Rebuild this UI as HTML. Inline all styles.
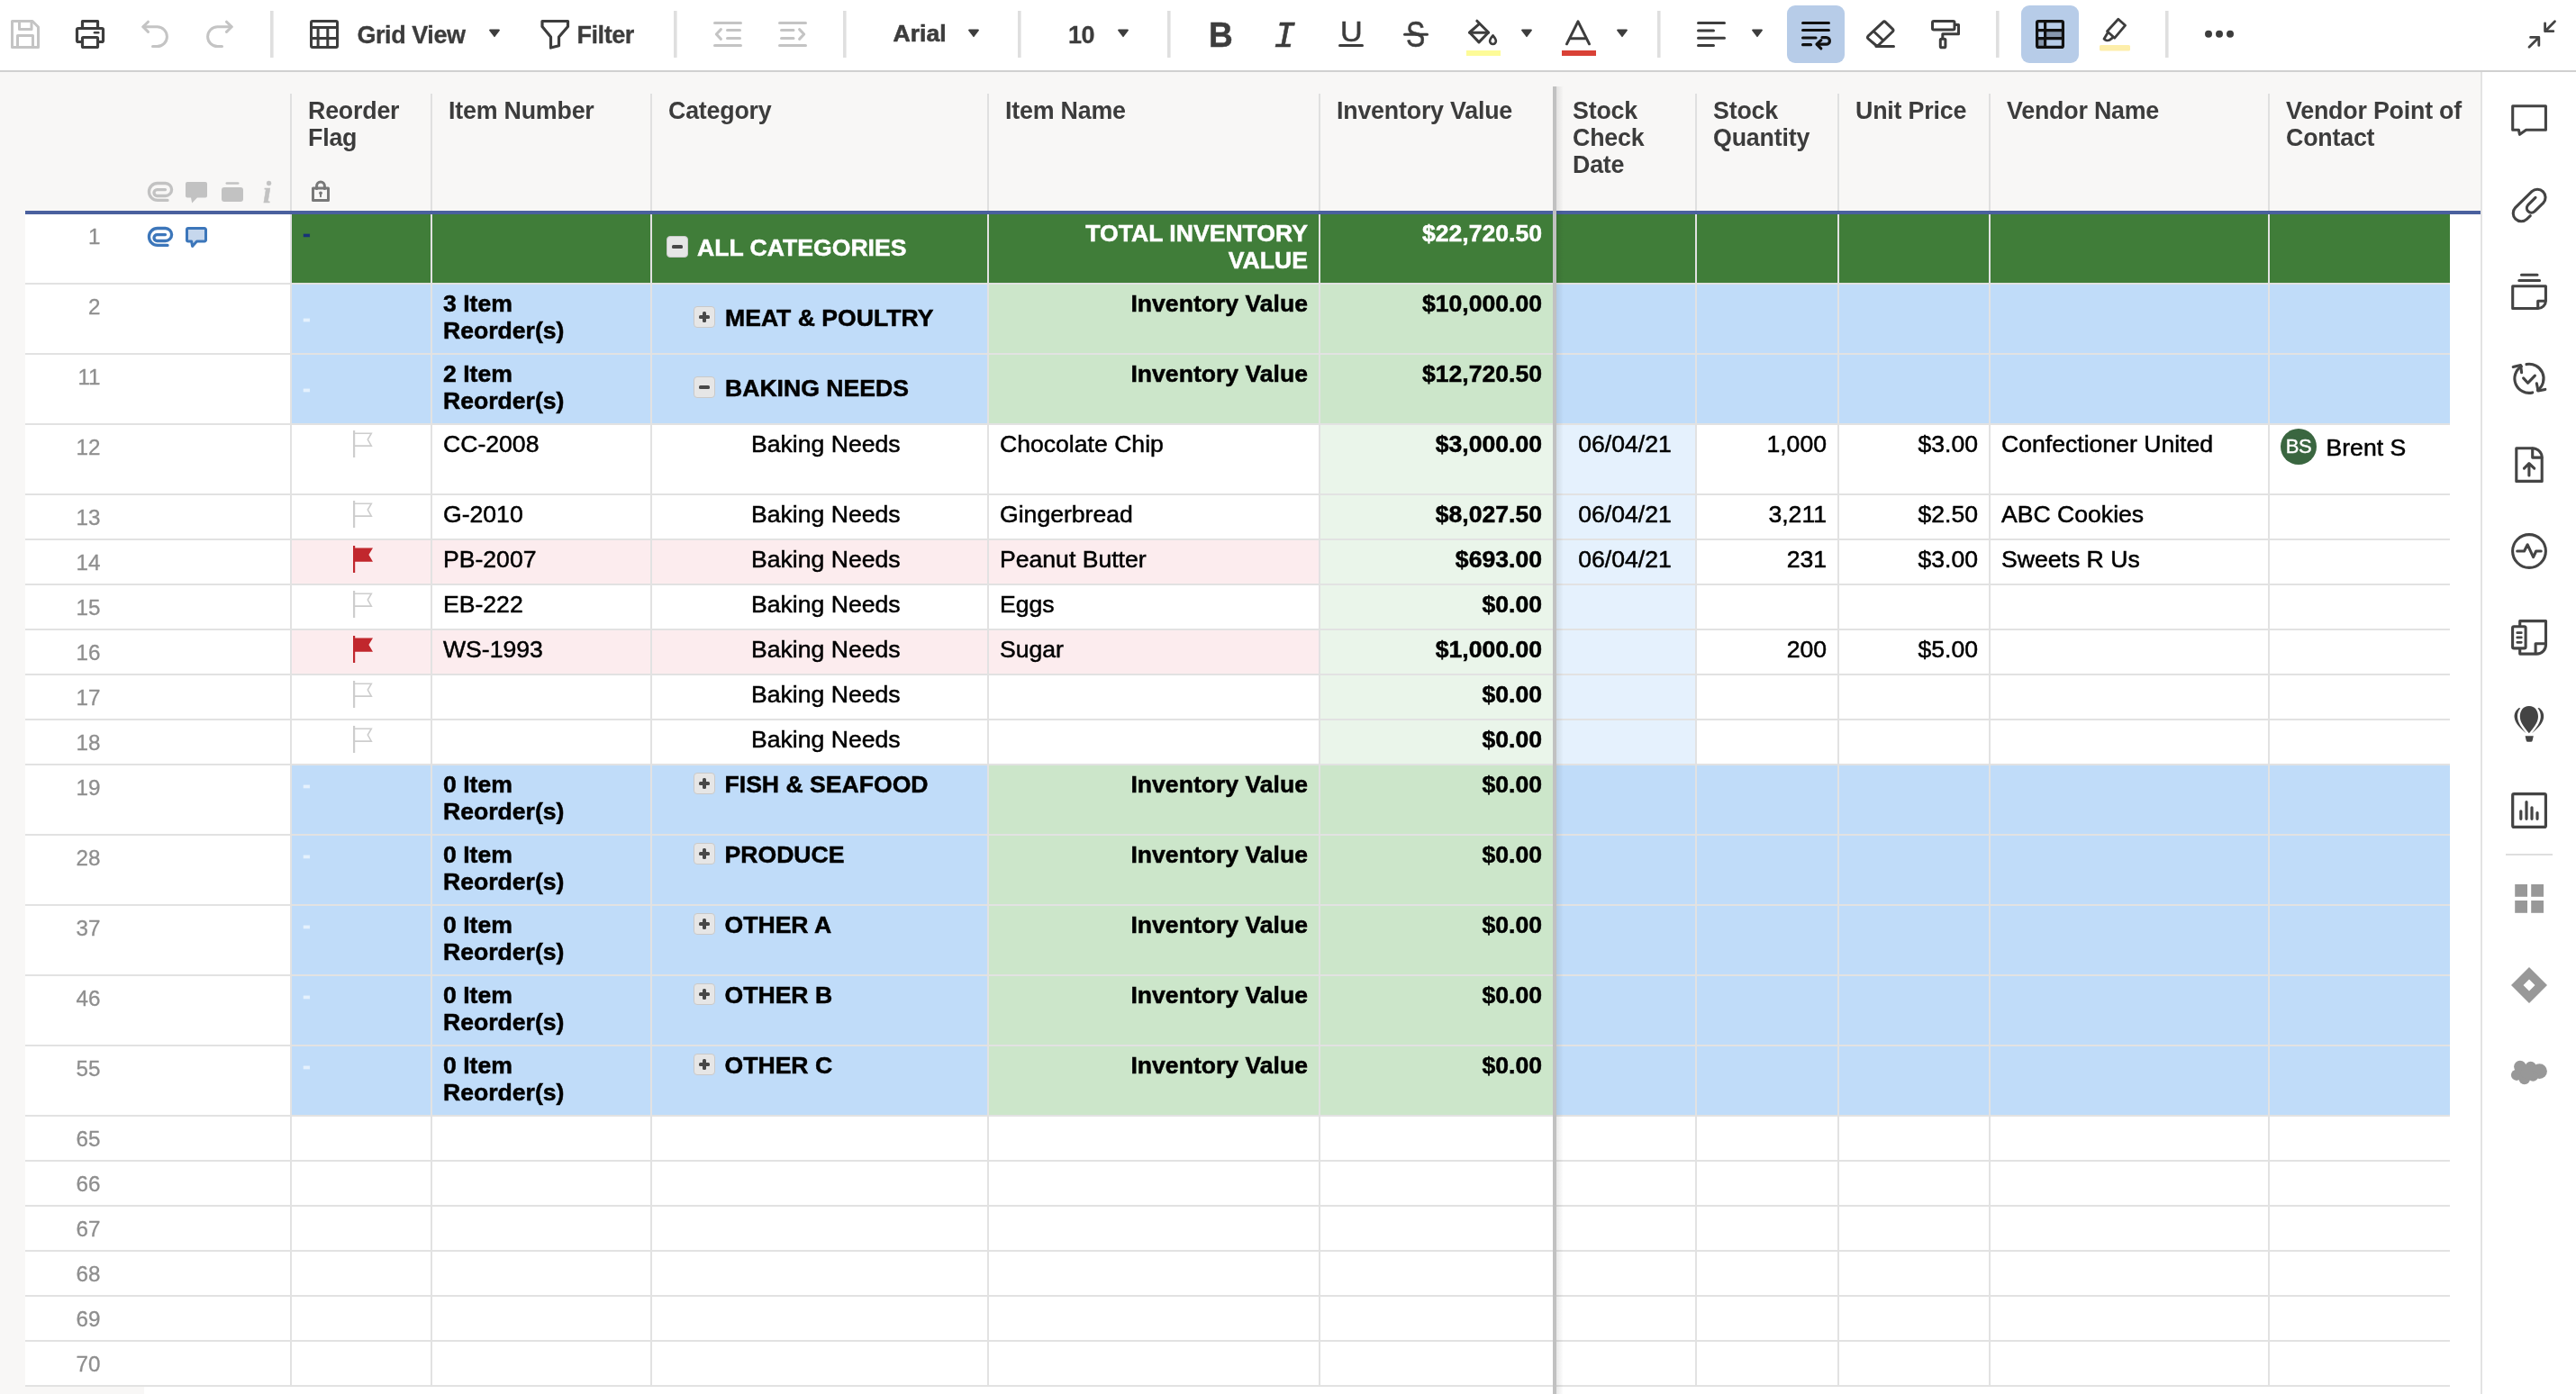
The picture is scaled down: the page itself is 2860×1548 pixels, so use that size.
<!DOCTYPE html>
<html lang="en"><head><meta charset="utf-8"><title>Inventory Sheet - Grid View</title>
<style>
html,body{margin:0;padding:0;}
body{width:2860px;height:1548px;overflow:hidden;background:#fff;position:relative;font-family:"Liberation Sans",sans-serif;}
#app{position:absolute;left:0;top:0;width:2860px;height:1548px;overflow:hidden;will-change:transform;}
.r,.a,.t{position:absolute;}
.t{font-size:26.6px;line-height:30px;color:#000;white-space:nowrap;-webkit-text-stroke:0.5px;}
.b{font-weight:bold;}
.h{font-weight:bold;color:#3c3c3c;font-size:26.8px;letter-spacing:-0.2px;-webkit-text-stroke:0;}
.n{color:#8e8e8e;font-size:24.2px;-webkit-text-stroke:0.3px;}
.tb{font-weight:bold;color:#3c3c3c;font-size:26px;-webkit-text-stroke:0.3px;}
svg{display:block;overflow:visible;}
</style></head><body><div id="app">

<div class="r" style="left:0px;top:80px;width:2754px;height:1468px;background:#f8f7f6;"></div>
<div class="r" style="left:28px;top:238px;width:2726px;height:1302px;background:#fff;"></div>
<div class="r" style="left:160px;top:1540px;width:2594px;height:8px;background:#fff;"></div>
<div class="r" style="left:2754px;top:80px;width:2px;height:1468px;background:#e3e3e3;"></div>
<div class="r" style="left:0px;top:78px;width:2860px;height:2px;background:#d0d0d0;"></div>
<div class="r" style="left:322px;top:104px;width:2px;height:130px;background:#e0e0e0;"></div>
<div class="r" style="left:478px;top:104px;width:2px;height:130px;background:#e0e0e0;"></div>
<div class="r" style="left:722px;top:104px;width:2px;height:130px;background:#e0e0e0;"></div>
<div class="r" style="left:1096px;top:104px;width:2px;height:130px;background:#e0e0e0;"></div>
<div class="r" style="left:1464px;top:104px;width:2px;height:130px;background:#e0e0e0;"></div>
<div class="r" style="left:1882px;top:104px;width:2px;height:130px;background:#e0e0e0;"></div>
<div class="r" style="left:2040px;top:104px;width:2px;height:130px;background:#e0e0e0;"></div>
<div class="r" style="left:2208px;top:104px;width:2px;height:130px;background:#e0e0e0;"></div>
<div class="r" style="left:2518px;top:104px;width:2px;height:130px;background:#e0e0e0;"></div>
<div class="t h" style="left:342px;top:108px;width:176px;text-align:left;">Reorder<br>Flag</div>
<div class="t h" style="left:498px;top:108px;width:264px;text-align:left;">Item Number</div>
<div class="t h" style="left:742px;top:108px;width:394px;text-align:left;">Category</div>
<div class="t h" style="left:1116px;top:108px;width:388px;text-align:left;">Item Name</div>
<div class="t h" style="left:1484px;top:108px;width:280px;text-align:left;">Inventory Value</div>
<div class="t h" style="left:1746px;top:108px;width:176px;text-align:left;">Stock<br>Check<br>Date</div>
<div class="t h" style="left:1902px;top:108px;width:178px;text-align:left;">Stock<br>Quantity</div>
<div class="t h" style="left:2060px;top:108px;width:188px;text-align:left;">Unit Price</div>
<div class="t h" style="left:2228px;top:108px;width:330px;text-align:left;">Vendor Name</div>
<div class="t h" style="left:2538px;top:108px;width:222px;text-align:left;">Vendor Point of<br>Contact</div>
<div class="r" style="left:324px;top:238px;width:154px;height:76px;background:#407d39;"></div>
<div class="r" style="left:480px;top:238px;width:242px;height:76px;background:#407d39;"></div>
<div class="r" style="left:724px;top:238px;width:372px;height:76px;background:#407d39;"></div>
<div class="r" style="left:1098px;top:238px;width:366px;height:76px;background:#407d39;"></div>
<div class="r" style="left:1466px;top:238px;width:258px;height:76px;background:#407d39;"></div>
<div class="r" style="left:1728px;top:238px;width:154px;height:76px;background:#407d39;"></div>
<div class="r" style="left:1884px;top:238px;width:156px;height:76px;background:#407d39;"></div>
<div class="r" style="left:2042px;top:238px;width:166px;height:76px;background:#407d39;"></div>
<div class="r" style="left:2210px;top:238px;width:308px;height:76px;background:#407d39;"></div>
<div class="r" style="left:2520px;top:238px;width:200px;height:76px;background:#407d39;"></div>
<div class="r" style="left:28px;top:314px;width:2692px;height:2px;background:#e2e2e2;"></div>
<div class="r" style="left:324px;top:316px;width:154px;height:76px;background:#c0dcf9;"></div>
<div class="r" style="left:480px;top:316px;width:242px;height:76px;background:#c0dcf9;"></div>
<div class="r" style="left:724px;top:316px;width:372px;height:76px;background:#c0dcf9;"></div>
<div class="r" style="left:1098px;top:316px;width:366px;height:76px;background:#cce6ca;"></div>
<div class="r" style="left:1466px;top:316px;width:258px;height:76px;background:#cce6ca;"></div>
<div class="r" style="left:1728px;top:316px;width:154px;height:76px;background:#c0dcf9;"></div>
<div class="r" style="left:1884px;top:316px;width:156px;height:76px;background:#c0dcf9;"></div>
<div class="r" style="left:2042px;top:316px;width:166px;height:76px;background:#c0dcf9;"></div>
<div class="r" style="left:2210px;top:316px;width:308px;height:76px;background:#c0dcf9;"></div>
<div class="r" style="left:2520px;top:316px;width:200px;height:76px;background:#c0dcf9;"></div>
<div class="r" style="left:28px;top:392px;width:2692px;height:2px;background:#e2e2e2;"></div>
<div class="r" style="left:324px;top:394px;width:154px;height:76px;background:#c0dcf9;"></div>
<div class="r" style="left:480px;top:394px;width:242px;height:76px;background:#c0dcf9;"></div>
<div class="r" style="left:724px;top:394px;width:372px;height:76px;background:#c0dcf9;"></div>
<div class="r" style="left:1098px;top:394px;width:366px;height:76px;background:#cce6ca;"></div>
<div class="r" style="left:1466px;top:394px;width:258px;height:76px;background:#cce6ca;"></div>
<div class="r" style="left:1728px;top:394px;width:154px;height:76px;background:#c0dcf9;"></div>
<div class="r" style="left:1884px;top:394px;width:156px;height:76px;background:#c0dcf9;"></div>
<div class="r" style="left:2042px;top:394px;width:166px;height:76px;background:#c0dcf9;"></div>
<div class="r" style="left:2210px;top:394px;width:308px;height:76px;background:#c0dcf9;"></div>
<div class="r" style="left:2520px;top:394px;width:200px;height:76px;background:#c0dcf9;"></div>
<div class="r" style="left:28px;top:470px;width:2692px;height:2px;background:#e2e2e2;"></div>
<div class="r" style="left:1466px;top:472px;width:258px;height:76px;background:#eaf5ea;"></div>
<div class="r" style="left:1728px;top:472px;width:154px;height:76px;background:#e5f1fd;"></div>
<div class="r" style="left:28px;top:548px;width:2692px;height:2px;background:#e2e2e2;"></div>
<div class="r" style="left:1466px;top:550px;width:258px;height:48px;background:#eaf5ea;"></div>
<div class="r" style="left:1728px;top:550px;width:154px;height:48px;background:#e5f1fd;"></div>
<div class="r" style="left:28px;top:598px;width:2692px;height:2px;background:#e2e2e2;"></div>
<div class="r" style="left:324px;top:600px;width:154px;height:48px;background:#fcecee;"></div>
<div class="r" style="left:480px;top:600px;width:242px;height:48px;background:#fcecee;"></div>
<div class="r" style="left:724px;top:600px;width:372px;height:48px;background:#fcecee;"></div>
<div class="r" style="left:1098px;top:600px;width:366px;height:48px;background:#fcecee;"></div>
<div class="r" style="left:1466px;top:600px;width:258px;height:48px;background:#eaf5ea;"></div>
<div class="r" style="left:1728px;top:600px;width:154px;height:48px;background:#e5f1fd;"></div>
<div class="r" style="left:28px;top:648px;width:2692px;height:2px;background:#e2e2e2;"></div>
<div class="r" style="left:1466px;top:650px;width:258px;height:48px;background:#eaf5ea;"></div>
<div class="r" style="left:1728px;top:650px;width:154px;height:48px;background:#e5f1fd;"></div>
<div class="r" style="left:28px;top:698px;width:2692px;height:2px;background:#e2e2e2;"></div>
<div class="r" style="left:324px;top:700px;width:154px;height:48px;background:#fcecee;"></div>
<div class="r" style="left:480px;top:700px;width:242px;height:48px;background:#fcecee;"></div>
<div class="r" style="left:724px;top:700px;width:372px;height:48px;background:#fcecee;"></div>
<div class="r" style="left:1098px;top:700px;width:366px;height:48px;background:#fcecee;"></div>
<div class="r" style="left:1466px;top:700px;width:258px;height:48px;background:#eaf5ea;"></div>
<div class="r" style="left:1728px;top:700px;width:154px;height:48px;background:#e5f1fd;"></div>
<div class="r" style="left:28px;top:748px;width:2692px;height:2px;background:#e2e2e2;"></div>
<div class="r" style="left:1466px;top:750px;width:258px;height:48px;background:#eaf5ea;"></div>
<div class="r" style="left:1728px;top:750px;width:154px;height:48px;background:#e5f1fd;"></div>
<div class="r" style="left:28px;top:798px;width:2692px;height:2px;background:#e2e2e2;"></div>
<div class="r" style="left:1466px;top:800px;width:258px;height:48px;background:#eaf5ea;"></div>
<div class="r" style="left:1728px;top:800px;width:154px;height:48px;background:#e5f1fd;"></div>
<div class="r" style="left:28px;top:848px;width:2692px;height:2px;background:#e2e2e2;"></div>
<div class="r" style="left:324px;top:850px;width:154px;height:76px;background:#c0dcf9;"></div>
<div class="r" style="left:480px;top:850px;width:242px;height:76px;background:#c0dcf9;"></div>
<div class="r" style="left:724px;top:850px;width:372px;height:76px;background:#c0dcf9;"></div>
<div class="r" style="left:1098px;top:850px;width:366px;height:76px;background:#cce6ca;"></div>
<div class="r" style="left:1466px;top:850px;width:258px;height:76px;background:#cce6ca;"></div>
<div class="r" style="left:1728px;top:850px;width:154px;height:76px;background:#c0dcf9;"></div>
<div class="r" style="left:1884px;top:850px;width:156px;height:76px;background:#c0dcf9;"></div>
<div class="r" style="left:2042px;top:850px;width:166px;height:76px;background:#c0dcf9;"></div>
<div class="r" style="left:2210px;top:850px;width:308px;height:76px;background:#c0dcf9;"></div>
<div class="r" style="left:2520px;top:850px;width:200px;height:76px;background:#c0dcf9;"></div>
<div class="r" style="left:28px;top:926px;width:2692px;height:2px;background:#e2e2e2;"></div>
<div class="r" style="left:324px;top:928px;width:154px;height:76px;background:#c0dcf9;"></div>
<div class="r" style="left:480px;top:928px;width:242px;height:76px;background:#c0dcf9;"></div>
<div class="r" style="left:724px;top:928px;width:372px;height:76px;background:#c0dcf9;"></div>
<div class="r" style="left:1098px;top:928px;width:366px;height:76px;background:#cce6ca;"></div>
<div class="r" style="left:1466px;top:928px;width:258px;height:76px;background:#cce6ca;"></div>
<div class="r" style="left:1728px;top:928px;width:154px;height:76px;background:#c0dcf9;"></div>
<div class="r" style="left:1884px;top:928px;width:156px;height:76px;background:#c0dcf9;"></div>
<div class="r" style="left:2042px;top:928px;width:166px;height:76px;background:#c0dcf9;"></div>
<div class="r" style="left:2210px;top:928px;width:308px;height:76px;background:#c0dcf9;"></div>
<div class="r" style="left:2520px;top:928px;width:200px;height:76px;background:#c0dcf9;"></div>
<div class="r" style="left:28px;top:1004px;width:2692px;height:2px;background:#e2e2e2;"></div>
<div class="r" style="left:324px;top:1006px;width:154px;height:76px;background:#c0dcf9;"></div>
<div class="r" style="left:480px;top:1006px;width:242px;height:76px;background:#c0dcf9;"></div>
<div class="r" style="left:724px;top:1006px;width:372px;height:76px;background:#c0dcf9;"></div>
<div class="r" style="left:1098px;top:1006px;width:366px;height:76px;background:#cce6ca;"></div>
<div class="r" style="left:1466px;top:1006px;width:258px;height:76px;background:#cce6ca;"></div>
<div class="r" style="left:1728px;top:1006px;width:154px;height:76px;background:#c0dcf9;"></div>
<div class="r" style="left:1884px;top:1006px;width:156px;height:76px;background:#c0dcf9;"></div>
<div class="r" style="left:2042px;top:1006px;width:166px;height:76px;background:#c0dcf9;"></div>
<div class="r" style="left:2210px;top:1006px;width:308px;height:76px;background:#c0dcf9;"></div>
<div class="r" style="left:2520px;top:1006px;width:200px;height:76px;background:#c0dcf9;"></div>
<div class="r" style="left:28px;top:1082px;width:2692px;height:2px;background:#e2e2e2;"></div>
<div class="r" style="left:324px;top:1084px;width:154px;height:76px;background:#c0dcf9;"></div>
<div class="r" style="left:480px;top:1084px;width:242px;height:76px;background:#c0dcf9;"></div>
<div class="r" style="left:724px;top:1084px;width:372px;height:76px;background:#c0dcf9;"></div>
<div class="r" style="left:1098px;top:1084px;width:366px;height:76px;background:#cce6ca;"></div>
<div class="r" style="left:1466px;top:1084px;width:258px;height:76px;background:#cce6ca;"></div>
<div class="r" style="left:1728px;top:1084px;width:154px;height:76px;background:#c0dcf9;"></div>
<div class="r" style="left:1884px;top:1084px;width:156px;height:76px;background:#c0dcf9;"></div>
<div class="r" style="left:2042px;top:1084px;width:166px;height:76px;background:#c0dcf9;"></div>
<div class="r" style="left:2210px;top:1084px;width:308px;height:76px;background:#c0dcf9;"></div>
<div class="r" style="left:2520px;top:1084px;width:200px;height:76px;background:#c0dcf9;"></div>
<div class="r" style="left:28px;top:1160px;width:2692px;height:2px;background:#e2e2e2;"></div>
<div class="r" style="left:324px;top:1162px;width:154px;height:76px;background:#c0dcf9;"></div>
<div class="r" style="left:480px;top:1162px;width:242px;height:76px;background:#c0dcf9;"></div>
<div class="r" style="left:724px;top:1162px;width:372px;height:76px;background:#c0dcf9;"></div>
<div class="r" style="left:1098px;top:1162px;width:366px;height:76px;background:#cce6ca;"></div>
<div class="r" style="left:1466px;top:1162px;width:258px;height:76px;background:#cce6ca;"></div>
<div class="r" style="left:1728px;top:1162px;width:154px;height:76px;background:#c0dcf9;"></div>
<div class="r" style="left:1884px;top:1162px;width:156px;height:76px;background:#c0dcf9;"></div>
<div class="r" style="left:2042px;top:1162px;width:166px;height:76px;background:#c0dcf9;"></div>
<div class="r" style="left:2210px;top:1162px;width:308px;height:76px;background:#c0dcf9;"></div>
<div class="r" style="left:2520px;top:1162px;width:200px;height:76px;background:#c0dcf9;"></div>
<div class="r" style="left:28px;top:1238px;width:2692px;height:2px;background:#e2e2e2;"></div>
<div class="r" style="left:28px;top:1288px;width:2692px;height:2px;background:#e2e2e2;"></div>
<div class="r" style="left:28px;top:1338px;width:2692px;height:2px;background:#e2e2e2;"></div>
<div class="r" style="left:28px;top:1388px;width:2692px;height:2px;background:#e2e2e2;"></div>
<div class="r" style="left:28px;top:1438px;width:2692px;height:2px;background:#e2e2e2;"></div>
<div class="r" style="left:28px;top:1488px;width:2692px;height:2px;background:#e2e2e2;"></div>
<div class="r" style="left:28px;top:1538px;width:2692px;height:2px;background:#e2e2e2;"></div>
<div class="r" style="left:322px;top:238px;width:2px;height:1302px;background:#e2e2e2;"></div>
<div class="r" style="left:478px;top:238px;width:2px;height:1302px;background:#e2e2e2;"></div>
<div class="r" style="left:722px;top:238px;width:2px;height:1302px;background:#e2e2e2;"></div>
<div class="r" style="left:1096px;top:238px;width:2px;height:1302px;background:#e2e2e2;"></div>
<div class="r" style="left:1464px;top:238px;width:2px;height:1302px;background:#e2e2e2;"></div>
<div class="r" style="left:1882px;top:238px;width:2px;height:1302px;background:#e2e2e2;"></div>
<div class="r" style="left:2040px;top:238px;width:2px;height:1302px;background:#e2e2e2;"></div>
<div class="r" style="left:2208px;top:238px;width:2px;height:1302px;background:#e2e2e2;"></div>
<div class="r" style="left:2518px;top:238px;width:2px;height:1302px;background:#e2e2e2;"></div>
<div class="r" style="left:28px;top:234px;width:2726px;height:4px;background:#4a609e;"></div>
<div class="r" style="left:1728px;top:96px;width:8px;height:1452px;background:transparent;background:linear-gradient(to right,rgba(0,0,0,0.085),rgba(0,0,0,0));"></div>
<div class="r" style="left:1724px;top:96px;width:4px;height:1452px;background:#c1c1c1;"></div>
<div class="t n" style="left:28px;top:248px;width:83.5px;text-align:right;">1</div>
<div class="t b" style="left:336px;top:244px;width:134px;text-align:left;color:#183378;">-</div>
<svg class="a" style="left:740px;top:262px" width="24" height="24" viewBox="0 0 24 24"><rect x="0.5" y="0.5" width="23" height="23" rx="3.5" fill="#e6e6e6" stroke="#c9c9c9"/><rect x="6" y="10" width="12" height="4" rx="1.5" fill="#484848"/></svg>
<div class="t b" style="left:774px;top:260px;width:322px;text-align:left;color:#fff;">ALL CATEGORIES</div>
<div class="t b" style="left:1098px;top:244px;width:354px;text-align:right;color:#fff;">TOTAL INVENTORY<br>VALUE</div>
<div class="t b" style="left:1466px;top:244px;width:246px;text-align:right;color:#fff;">$22,720.50</div>
<div class="t n" style="left:28px;top:326px;width:83.5px;text-align:right;">2</div>
<div class="t b" style="left:336px;top:338px;width:134px;text-align:left;color:#e5f1fd;">-</div>
<div class="t b" style="left:492px;top:322px;width:230px;text-align:left;">3 Item<br>Reorder(s)</div>
<svg class="a" style="left:770px;top:340px" width="24" height="24" viewBox="0 0 24 24"><rect x="0.5" y="0.5" width="23" height="23" rx="3.5" fill="#e6e6e6" stroke="#c9c9c9"/><rect x="6" y="10" width="12" height="4" rx="1.5" fill="#484848"/><rect x="10" y="6" width="4" height="12" rx="1.5" fill="#484848"/></svg>
<div class="t b" style="left:805px;top:338px;width:291px;text-align:left;">MEAT &amp; POULTRY</div>
<div class="t b" style="left:1098px;top:322px;width:354px;text-align:right;">Inventory Value</div>
<div class="t b" style="left:1466px;top:322px;width:246px;text-align:right;">$10,000.00</div>
<div class="t n" style="left:28px;top:404px;width:83.5px;text-align:right;">11</div>
<div class="t b" style="left:336px;top:416px;width:134px;text-align:left;color:#e5f1fd;">-</div>
<div class="t b" style="left:492px;top:400px;width:230px;text-align:left;">2 Item<br>Reorder(s)</div>
<svg class="a" style="left:770px;top:418px" width="24" height="24" viewBox="0 0 24 24"><rect x="0.5" y="0.5" width="23" height="23" rx="3.5" fill="#e6e6e6" stroke="#c9c9c9"/><rect x="6" y="10" width="12" height="4" rx="1.5" fill="#484848"/></svg>
<div class="t b" style="left:805px;top:416px;width:291px;text-align:left;">BAKING NEEDS</div>
<div class="t b" style="left:1098px;top:400px;width:354px;text-align:right;">Inventory Value</div>
<div class="t b" style="left:1466px;top:400px;width:246px;text-align:right;">$12,720.50</div>
<div class="t n" style="left:28px;top:482px;width:83.5px;text-align:right;">12</div>
<svg class="a" style="left:392px;top:478px" width="24" height="31" viewBox="0 0 24 31"><path d="M1.1 0V30" stroke="#cdcdcd" stroke-width="2.2" fill="none"/><path d="M2 3.2H20.3l-4 6.9 4 7H2" stroke="#cdcdcd" stroke-width="1.6" fill="none"/></svg>
<div class="t " style="left:492px;top:478px;width:230px;text-align:left;">CC-2008</div>
<div class="t " style="left:834px;top:478px;width:262px;text-align:left;">Baking Needs</div>
<div class="t " style="left:1110px;top:478px;width:354px;text-align:left;">Chocolate Chip</div>
<div class="t b" style="left:1466px;top:478px;width:246px;text-align:right;">$3,000.00</div>
<div class="t " style="left:1726px;top:478px;width:156px;text-align:center;">06/04/21</div>
<div class="t " style="left:1884px;top:478px;width:144px;text-align:right;">1,000</div>
<div class="t " style="left:2042px;top:478px;width:154px;text-align:right;">$3.00</div>
<div class="t " style="left:2222px;top:478px;width:296px;text-align:left;">Confectioner United</div>
<div class="a" style="left:2532px;top:476px;width:40px;height:40px;border-radius:20px;background:#3a6640;color:#fff;font-size:22px;line-height:40.5px;text-align:center;letter-spacing:-0.3px;-webkit-text-stroke:0.4px">BS</div>
<div class="t " style="left:2582.5px;top:481.7px;width:137.5px;text-align:left;">Brent S</div>
<div class="t n" style="left:28px;top:560px;width:83.5px;text-align:right;">13</div>
<svg class="a" style="left:392px;top:556px" width="24" height="31" viewBox="0 0 24 31"><path d="M1.1 0V30" stroke="#cdcdcd" stroke-width="2.2" fill="none"/><path d="M2 3.2H20.3l-4 6.9 4 7H2" stroke="#cdcdcd" stroke-width="1.6" fill="none"/></svg>
<div class="t " style="left:492px;top:556px;width:230px;text-align:left;">G-2010</div>
<div class="t " style="left:834px;top:556px;width:262px;text-align:left;">Baking Needs</div>
<div class="t " style="left:1110px;top:556px;width:354px;text-align:left;">Gingerbread</div>
<div class="t b" style="left:1466px;top:556px;width:246px;text-align:right;">$8,027.50</div>
<div class="t " style="left:1726px;top:556px;width:156px;text-align:center;">06/04/21</div>
<div class="t " style="left:1884px;top:556px;width:144px;text-align:right;">3,211</div>
<div class="t " style="left:2042px;top:556px;width:154px;text-align:right;">$2.50</div>
<div class="t " style="left:2222px;top:556px;width:296px;text-align:left;">ABC Cookies</div>
<div class="t n" style="left:28px;top:610px;width:83.5px;text-align:right;">14</div>
<svg class="a" style="left:392px;top:606px" width="24" height="31" viewBox="0 0 24 31"><path d="M0 0h2.2v2.4H22l-4.6 7.6L22 17.8H2.2V30H0z" fill="#c1272d"/></svg>
<div class="t " style="left:492px;top:606px;width:230px;text-align:left;">PB-2007</div>
<div class="t " style="left:834px;top:606px;width:262px;text-align:left;">Baking Needs</div>
<div class="t " style="left:1110px;top:606px;width:354px;text-align:left;">Peanut Butter</div>
<div class="t b" style="left:1466px;top:606px;width:246px;text-align:right;">$693.00</div>
<div class="t " style="left:1726px;top:606px;width:156px;text-align:center;">06/04/21</div>
<div class="t " style="left:1884px;top:606px;width:144px;text-align:right;">231</div>
<div class="t " style="left:2042px;top:606px;width:154px;text-align:right;">$3.00</div>
<div class="t " style="left:2222px;top:606px;width:296px;text-align:left;">Sweets R Us</div>
<div class="t n" style="left:28px;top:660px;width:83.5px;text-align:right;">15</div>
<svg class="a" style="left:392px;top:656px" width="24" height="31" viewBox="0 0 24 31"><path d="M1.1 0V30" stroke="#cdcdcd" stroke-width="2.2" fill="none"/><path d="M2 3.2H20.3l-4 6.9 4 7H2" stroke="#cdcdcd" stroke-width="1.6" fill="none"/></svg>
<div class="t " style="left:492px;top:656px;width:230px;text-align:left;">EB-222</div>
<div class="t " style="left:834px;top:656px;width:262px;text-align:left;">Baking Needs</div>
<div class="t " style="left:1110px;top:656px;width:354px;text-align:left;">Eggs</div>
<div class="t b" style="left:1466px;top:656px;width:246px;text-align:right;">$0.00</div>
<div class="t n" style="left:28px;top:710px;width:83.5px;text-align:right;">16</div>
<svg class="a" style="left:392px;top:706px" width="24" height="31" viewBox="0 0 24 31"><path d="M0 0h2.2v2.4H22l-4.6 7.6L22 17.8H2.2V30H0z" fill="#c1272d"/></svg>
<div class="t " style="left:492px;top:706px;width:230px;text-align:left;">WS-1993</div>
<div class="t " style="left:834px;top:706px;width:262px;text-align:left;">Baking Needs</div>
<div class="t " style="left:1110px;top:706px;width:354px;text-align:left;">Sugar</div>
<div class="t b" style="left:1466px;top:706px;width:246px;text-align:right;">$1,000.00</div>
<div class="t " style="left:1884px;top:706px;width:144px;text-align:right;">200</div>
<div class="t " style="left:2042px;top:706px;width:154px;text-align:right;">$5.00</div>
<div class="t n" style="left:28px;top:760px;width:83.5px;text-align:right;">17</div>
<svg class="a" style="left:392px;top:756px" width="24" height="31" viewBox="0 0 24 31"><path d="M1.1 0V30" stroke="#cdcdcd" stroke-width="2.2" fill="none"/><path d="M2 3.2H20.3l-4 6.9 4 7H2" stroke="#cdcdcd" stroke-width="1.6" fill="none"/></svg>
<div class="t " style="left:834px;top:756px;width:262px;text-align:left;">Baking Needs</div>
<div class="t b" style="left:1466px;top:756px;width:246px;text-align:right;">$0.00</div>
<div class="t n" style="left:28px;top:810px;width:83.5px;text-align:right;">18</div>
<svg class="a" style="left:392px;top:806px" width="24" height="31" viewBox="0 0 24 31"><path d="M1.1 0V30" stroke="#cdcdcd" stroke-width="2.2" fill="none"/><path d="M2 3.2H20.3l-4 6.9 4 7H2" stroke="#cdcdcd" stroke-width="1.6" fill="none"/></svg>
<div class="t " style="left:834px;top:806px;width:262px;text-align:left;">Baking Needs</div>
<div class="t b" style="left:1466px;top:806px;width:246px;text-align:right;">$0.00</div>
<div class="t n" style="left:28px;top:860px;width:83.5px;text-align:right;">19</div>
<div class="t b" style="left:336px;top:856px;width:134px;text-align:left;color:#e5f1fd;">-</div>
<div class="t b" style="left:492px;top:856px;width:230px;text-align:left;">0 Item<br>Reorder(s)</div>
<svg class="a" style="left:770px;top:858px" width="24" height="24" viewBox="0 0 24 24"><rect x="0.5" y="0.5" width="23" height="23" rx="3.5" fill="#e6e6e6" stroke="#c9c9c9"/><rect x="6" y="10" width="12" height="4" rx="1.5" fill="#484848"/><rect x="10" y="6" width="4" height="12" rx="1.5" fill="#484848"/></svg>
<div class="t b" style="left:804.5px;top:856px;width:291.5px;text-align:left;">FISH &amp; SEAFOOD</div>
<div class="t b" style="left:1098px;top:856px;width:354px;text-align:right;">Inventory Value</div>
<div class="t b" style="left:1466px;top:856px;width:246px;text-align:right;">$0.00</div>
<div class="t n" style="left:28px;top:938px;width:83.5px;text-align:right;">28</div>
<div class="t b" style="left:336px;top:934px;width:134px;text-align:left;color:#e5f1fd;">-</div>
<div class="t b" style="left:492px;top:934px;width:230px;text-align:left;">0 Item<br>Reorder(s)</div>
<svg class="a" style="left:770px;top:936px" width="24" height="24" viewBox="0 0 24 24"><rect x="0.5" y="0.5" width="23" height="23" rx="3.5" fill="#e6e6e6" stroke="#c9c9c9"/><rect x="6" y="10" width="12" height="4" rx="1.5" fill="#484848"/><rect x="10" y="6" width="4" height="12" rx="1.5" fill="#484848"/></svg>
<div class="t b" style="left:804.5px;top:934px;width:291.5px;text-align:left;">PRODUCE</div>
<div class="t b" style="left:1098px;top:934px;width:354px;text-align:right;">Inventory Value</div>
<div class="t b" style="left:1466px;top:934px;width:246px;text-align:right;">$0.00</div>
<div class="t n" style="left:28px;top:1016px;width:83.5px;text-align:right;">37</div>
<div class="t b" style="left:336px;top:1012px;width:134px;text-align:left;color:#e5f1fd;">-</div>
<div class="t b" style="left:492px;top:1012px;width:230px;text-align:left;">0 Item<br>Reorder(s)</div>
<svg class="a" style="left:770px;top:1014px" width="24" height="24" viewBox="0 0 24 24"><rect x="0.5" y="0.5" width="23" height="23" rx="3.5" fill="#e6e6e6" stroke="#c9c9c9"/><rect x="6" y="10" width="12" height="4" rx="1.5" fill="#484848"/><rect x="10" y="6" width="4" height="12" rx="1.5" fill="#484848"/></svg>
<div class="t b" style="left:804.5px;top:1012px;width:291.5px;text-align:left;">OTHER A</div>
<div class="t b" style="left:1098px;top:1012px;width:354px;text-align:right;">Inventory Value</div>
<div class="t b" style="left:1466px;top:1012px;width:246px;text-align:right;">$0.00</div>
<div class="t n" style="left:28px;top:1094px;width:83.5px;text-align:right;">46</div>
<div class="t b" style="left:336px;top:1090px;width:134px;text-align:left;color:#e5f1fd;">-</div>
<div class="t b" style="left:492px;top:1090px;width:230px;text-align:left;">0 Item<br>Reorder(s)</div>
<svg class="a" style="left:770px;top:1092px" width="24" height="24" viewBox="0 0 24 24"><rect x="0.5" y="0.5" width="23" height="23" rx="3.5" fill="#e6e6e6" stroke="#c9c9c9"/><rect x="6" y="10" width="12" height="4" rx="1.5" fill="#484848"/><rect x="10" y="6" width="4" height="12" rx="1.5" fill="#484848"/></svg>
<div class="t b" style="left:804.5px;top:1090px;width:291.5px;text-align:left;">OTHER B</div>
<div class="t b" style="left:1098px;top:1090px;width:354px;text-align:right;">Inventory Value</div>
<div class="t b" style="left:1466px;top:1090px;width:246px;text-align:right;">$0.00</div>
<div class="t n" style="left:28px;top:1172px;width:83.5px;text-align:right;">55</div>
<div class="t b" style="left:336px;top:1168px;width:134px;text-align:left;color:#e5f1fd;">-</div>
<div class="t b" style="left:492px;top:1168px;width:230px;text-align:left;">0 Item<br>Reorder(s)</div>
<svg class="a" style="left:770px;top:1170px" width="24" height="24" viewBox="0 0 24 24"><rect x="0.5" y="0.5" width="23" height="23" rx="3.5" fill="#e6e6e6" stroke="#c9c9c9"/><rect x="6" y="10" width="12" height="4" rx="1.5" fill="#484848"/><rect x="10" y="6" width="4" height="12" rx="1.5" fill="#484848"/></svg>
<div class="t b" style="left:804.5px;top:1168px;width:291.5px;text-align:left;">OTHER C</div>
<div class="t b" style="left:1098px;top:1168px;width:354px;text-align:right;">Inventory Value</div>
<div class="t b" style="left:1466px;top:1168px;width:246px;text-align:right;">$0.00</div>
<div class="t n" style="left:28px;top:1250px;width:83.5px;text-align:right;">65</div>
<div class="t n" style="left:28px;top:1300px;width:83.5px;text-align:right;">66</div>
<div class="t n" style="left:28px;top:1350px;width:83.5px;text-align:right;">67</div>
<div class="t n" style="left:28px;top:1400px;width:83.5px;text-align:right;">68</div>
<div class="t n" style="left:28px;top:1450px;width:83.5px;text-align:right;">69</div>
<div class="t n" style="left:28px;top:1500px;width:83.5px;text-align:right;">70</div>
<svg class="a" style="left:140px;top:190px" width="240" height="44" viewBox="140 190 240 44" fill="none" stroke-linecap="round" stroke-linejoin="round"><path d="M186 222.4H174.9A9.45 9.45 0 0 1 174.9 203.5H183.6A7 7 0 0 1 183.6 217.5H174.4A3.45 3.45 0 0 1 174.4 210.6H183.5" stroke="#c2c2c2" stroke-width="3.3"/><path d="M208 202H228A2 2 0 0 1 230 204V217.5A2 2 0 0 1 228 219.5H219L213.2 225.6L212 219.5H208A2 2 0 0 1 206 217.5V204A2 2 0 0 1 208 202Z" fill="#c2c2c2"/><rect x="246" y="208" width="24" height="16" rx="3" fill="#c2c2c2"/><rect x="250.5" y="202.2" width="15" height="2.6" rx="1.3" fill="#c2c2c2"/><path d="M351.6 209.5V206.4A4.4 4.4 0 0 1 360.4 206.4V209.5" stroke="#787878" stroke-width="3"/><rect x="347.5" y="209" width="17" height="13.5" stroke="#787878" stroke-width="3"/><circle cx="356" cy="214.3" r="1.9" fill="#787878"/><path d="M356 214.5V218.3" stroke="#787878" stroke-width="2"/></svg>
<div class="t" style="left:292px;top:196px;font-family:'Liberation Serif',serif;font-style:italic;font-weight:bold;font-size:33px;line-height:36px;color:#c2c2c2">i</div>
<svg class="a" style="left:140px;top:246px" width="120" height="36" viewBox="140 246 120 36" fill="none" stroke-linecap="round" stroke-linejoin="round"><path d="M186 272.4H174.9A9.45 9.45 0 0 1 174.9 253.5H183.6A7 7 0 0 1 183.6 267.5H174.4A3.45 3.45 0 0 1 174.4 260.6H183.5" stroke="#3c76ba" stroke-width="3.3"/><path d="M209 253.5H227A1.5 1.5 0 0 1 228.5 255V266.5A1.5 1.5 0 0 1 227 268H218.5L213.6 273.4L212.6 268H209A1.5 1.5 0 0 1 207.5 266.5V255A1.5 1.5 0 0 1 209 253.5Z" fill="#c6d7ed" stroke="#3c76ba" stroke-width="3"/></svg>
<svg class="a" style="left:0;top:0" width="2860" height="78" viewBox="0 0 2860 78" fill="none" stroke-linecap="round" stroke-linejoin="round"><rect x="1984" y="6" width="64" height="64" rx="9" fill="#b7cce8"/><rect x="2244" y="6" width="64" height="64" rx="9" fill="#b7cce8"/><rect x="300" y="12" width="3.6" height="52" fill="#dfdfdf"/><rect x="748" y="12" width="3.6" height="52" fill="#dfdfdf"/><rect x="936" y="12" width="3.6" height="52" fill="#dfdfdf"/><rect x="1130" y="12" width="3.6" height="52" fill="#dfdfdf"/><rect x="1296" y="12" width="3.6" height="52" fill="#dfdfdf"/><rect x="1840" y="12" width="3.6" height="52" fill="#dfdfdf"/><rect x="2216" y="12" width="3.6" height="52" fill="#dfdfdf"/><rect x="2404" y="12" width="3.6" height="52" fill="#dfdfdf"/><g stroke="#c4c4c4" stroke-width="3"><path d="M13.5 23.5H36L42.5 30V52.5H13.5Z"/><path d="M21.5 23.5V32.5H35V23.5"/><path d="M19.5 52.5V39.5H36.5V52.5"/></g><g stroke="#3d3d3d" stroke-width="3.2"><path d="M91.5 31V23.5H108.5V31"/><rect x="85.5" y="31.5" width="29" height="15" rx="1.5"/><rect x="91.5" y="41.5" width="17" height="11" rx="1" fill="#fff"/><path d="M105 36.3H109.2" stroke-width="2.6"/></g><g stroke="#c4c4c4" stroke-width="3"><path d="M164.5 24.2L158.8 29.8L164.5 35.4"/><path d="M159 29.8H174.5A10.9 10.9 0 0 1 174.5 51.6H169.5"/></g><g stroke="#c4c4c4" stroke-width="3"><path d="M251.5 24.2L257.2 29.8L251.5 35.4"/><path d="M257 29.8H241.5A10.9 10.9 0 0 0 241.5 51.6H246.5"/></g><g stroke="#3d3d3d" stroke-width="3"><rect x="345.5" y="23.5" width="29" height="29" rx="1.5"/><path d="M345.5 30.6H374.5M345.5 42.4H374.5M353.1 30.6V52.5M363.8 30.6V52.5"/></g><path d="M544 32.6h10a0.9 0.9 0 0 1 .75 1.4l-5 6.6a0.9 0.9 0 0 1-1.5 0l-5-6.6a0.9 0.9 0 0 1 .75-1.4z" fill="#3d3d3d"/><path d="M602 23.5H630.5V29.5L620.5 41V50.8L611.5 53V41L602 29.5Z" stroke="#3d3d3d" stroke-width="3.2"/><g stroke="#c4c4c4" stroke-width="3"><path d="M793.5 25.5H822.5M793.5 50.5H822.5M807.5 33.5H821.5M807.5 42.5H821.5"/><path d="M800.4 32.600L795.300 38L800.400 43.400"/></g><g stroke="#c4c4c4" stroke-width="3"><path d="M865.5 25.5H894.5M865.5 50.5H894.5M867.5 33.5H881M867.5 42.5H881"/><path d="M887.600 32.600L892.700 38L887.600 43.400"/></g><path d="M1076 32.6h10a0.9 0.9 0 0 1 .75 1.4l-5 6.6a0.9 0.9 0 0 1-1.5 0l-5-6.6a0.9 0.9 0 0 1 .75-1.4z" fill="#3d3d3d"/><path d="M1242 32.6h10a0.9 0.9 0 0 1 .75 1.4l-5 6.6a0.9 0.9 0 0 1-1.5 0l-5-6.6a0.9 0.9 0 0 1 .75-1.4z" fill="#3d3d3d"/><path d="M1690 32.6h10a0.9 0.9 0 0 1 .75 1.4l-5 6.6a0.9 0.9 0 0 1-1.5 0l-5-6.6a0.9 0.9 0 0 1 .75-1.4z" fill="#3d3d3d"/><path d="M1796 32.6h10a0.9 0.9 0 0 1 .75 1.4l-5 6.6a0.9 0.9 0 0 1-1.5 0l-5-6.6a0.9 0.9 0 0 1 .75-1.4z" fill="#3d3d3d"/><path d="M1946 32.6h10a0.9 0.9 0 0 1 .75 1.4l-5 6.6a0.9 0.9 0 0 1-1.5 0l-5-6.6a0.9 0.9 0 0 1 .75-1.4z" fill="#3d3d3d"/><path d="M1487.5 50.5H1512.5" stroke="#3d3d3d" stroke-width="3"/><path d="M1559.5 38.2H1584.5" stroke="#3d3d3d" stroke-width="3"/><g stroke="#3d3d3d" stroke-width="3"><path d="M1639.8 23.2L1652.6 36L1642 46.9L1631.6 36L1642.8 26.2"/><path d="M1631.6 36.2H1652.4"/><path d="M1657.5 39.3C1660 42.3 1660.9 44 1660.9 45.6A3.4 3.4 0 0 1 1654.1 45.6C1654.1 44 1655 42.3 1657.5 39.3Z" stroke-width="2.6"/></g><rect x="1628" y="56" width="38" height="6" fill="#fdfb98"/><g stroke="#3d3d3d" stroke-width="3"><path d="M1739.5 48.8L1752 23.8L1764.5 48.8"/><path d="M1744 42.8H1760"/></g><rect x="1734" y="56" width="38" height="6" fill="#d94136"/><path d="M1885.5 25.5H1914.5M1885.5 34H1902.5M1885.5 42.2H1914.5M1885.5 50.5H1902.5" stroke="#3d3d3d" stroke-width="3"/><g stroke="#111" stroke-width="3.2"><path d="M2001.6 25.5H2030.4M2001.6 33.5H2030.4M2001.6 42H2016M2001.6 49.7H2010.5"/><path d="M2023 41.6H2027.6A3.8 3.8 0 0 1 2027.6 49.2H2017.6"/><path d="M2021.8 44.6L2017 49.2L2021.800 53.8"/></g><g stroke="#3d3d3d" stroke-width="3"><path d="M2083 50.5L2074 42.8A2 2 0 0 1 2074 40.2L2090.6 24.6A2 2 0 0 1 2093.4 24.6L2101.4 32.3A2 2 0 0 1 2101.4 35L2085.3 50.5Z"/><path d="M2081.5 36L2090.5 44.5"/><path d="M2083 51.5H2102.5"/></g><g stroke="#3d3d3d" stroke-width="3"><rect x="2145.5" y="23.5" width="24.5" height="9.5" rx="1.5"/><path d="M2170.5 27.5H2174.5V37.8H2156.8V42"/><rect x="2154.3" y="43.3" width="5.6" height="9.4" rx="1.3"/></g><rect x="2272" y="35" width="18" height="7" fill="#8797ad"/><rect x="2262" y="44" width="8" height="8" fill="#8797ad"/><g stroke="#111" stroke-width="3.2"><rect x="2261.6" y="23.6" width="28.8" height="28.8" rx="1.5"/><path d="M2270.6 23.6V52.4M2261.6 33.6H2290.4M2261.6 42.6H2290.4"/></g><g stroke="#3d3d3d" stroke-width="2.8"><path d="M2351.8 21.2L2359.6 28.2L2347.8 42.2L2339.5 34.8Z"/><path d="M2340.2 36.2L2336 43.2C2337.5 45 2340.5 45.3 2342.5 44.2L2346.3 41.3"/></g><rect x="2331" y="50" width="34" height="6.5" rx="1.5" fill="#fdeeaa"/><circle cx="2452" cy="37.8" r="4" fill="#3d3d3d"/><circle cx="2464" cy="37.8" r="4" fill="#3d3d3d"/><circle cx="2476" cy="37.8" r="4" fill="#3d3d3d"/><g stroke="#444" stroke-width="2.8"><path d="M2836.5 23.8L2825.6 34.7M2825.6 25.8V34.7H2834.8"/><path d="M2808 52.2L2818.8 41.4M2809.6 41.4H2818.8V50.4"/></g></svg>
<div class="t tb" style="left:396.5px;top:24px;font-size:27px;letter-spacing:-0.45px">Grid View</div>
<div class="t tb" style="left:640.5px;top:24px;font-size:27px;letter-spacing:-0.45px">Filter</div>
<div class="t tb" style="left:991.5px;top:22px;font-size:26.6px;-webkit-text-stroke:0.6px">Arial</div>
<div class="t tb" style="left:1186px;top:24px;font-size:27px;letter-spacing:-0.6px">10</div>
<div class="t" style="left:1341.5px;top:14px;font-size:39px;transform:scaleX(0.95);transform-origin:0 0;line-height:50px;font-weight:bold;color:#3d3d3d">B</div>
<div class="t" style="left:1414px;top:15.8px;font-size:41px;line-height:50px;font-style:italic;font-family:'Liberation Mono',monospace;color:#3d3d3d">I</div>
<div class="t" style="left:1487.6px;top:15.2px;font-size:32px;line-height:40px;transform:scaleX(1.07);transform-origin:0 0;color:#3d3d3d">U</div>
<div class="t" style="left:1561px;top:13.2px;font-size:40px;transform:scaleX(0.8);transform-origin:0 0;line-height:50px;color:#3d3d3d">S</div>
<svg class="a" style="left:2756px;top:80px" width="104" height="1468" viewBox="2756 80 104 1468" fill="none" stroke-linecap="round" stroke-linejoin="round"><path d="M2789.7 117.7H2826.4V144.3H2804.6L2797.5 149.3L2796.4 144.3H2789.7Z" stroke="#444" stroke-width="3.1"/><path d="M2815 219.400L2806.700 227.700A5.100 5.100 0 0 0 2813.900 234.900L2823.660 225.360A9 9 0 0 0 2810.940 212.640L2792.640 230.640A9 9 0 0 0 2805.360 243.360L2809.300 239.700" stroke="#444" stroke-width="3.1"/><g stroke="#444" stroke-width="3.1"><path d="M2799.5 305.3H2817M2796.8 311.500H2819.6"/><path d="M2789.700 317.700H2826.4V334A8.500 8.500 0 0 1 2817.9 342.500H2789.700Z"/><path d="M2826 334.200H2817.700V342"/></g><g stroke="#444" stroke-width="3.1"><path d="M2799.400 406.800A16 16 0 0 0 2811.700 435.900"/><path d="M2805 404.600A16 16 0 0 1 2817.400 433.300"/><path d="M2790.200 407.400L2798.500 405.500L2799.600 413.800"/><path d="M2816.300 425.700L2818 434L2825.800 432.400"/><path d="M2801.600 419.900L2806.500 425.300L2814.400 417.100"/></g><g stroke="#444" stroke-width="3.1"><path d="M2793.800 497.700H2811.700A10.500 10.500 0 0 1 2822.200 508.200V534.400H2793.800Z"/><path d="M2811.700 498V508.100H2822"/><path d="M2807.900 528V515M2802.400 520.200L2807.900 514.600L2813.700 520.200"/></g><g stroke="#444" stroke-width="3.1"><circle cx="2808" cy="612" r="18.400"/><path d="M2794.700 612H2802.500L2806.200 604.800L2812.600 618.700L2815.700 612H2821.200"/></g><g stroke="#444" stroke-width="3.1"><path d="M2797.700 695V689.600H2826.500V716A10 10 0 0 1 2816.500 726.100H2797.700V720.500"/><path d="M2826 714.800H2815.100V725.600"/><rect x="2789.600" y="695.800" width="14.500" height="24.100" rx="1.500"/><path d="M2794.800 702.700H2799.300M2794.800 707.900H2799.300M2794.800 713.300H2799.300" stroke-width="2.800"/></g><path d="M2807.900 783.900C2814.500 783.900 2818.200 789.500 2818 796C2817.800 803 2812.500 808.500 2807.900 814.300C2803.300 808.500 2798 803 2797.800 796C2797.600 789.500 2801.300 783.900 2807.900 783.900Z" fill="#444"/><path d="M2796.800 786C2792.600 789 2791 793.200 2791.800 797.500C2793 804 2799 809.500 2804.800 814.300C2800 808.500 2795.600 803 2795 796.200C2794.700 792.600 2796 789 2798.300 786.500Z" fill="#444"/><path d="M2819 786C2823.200 789 2824.800 793.200 2824 797.500C2822.800 804 2816.800 809.500 2811 814.300C2815.800 808.500 2820.200 803 2820.800 796.200C2821.100 792.600 2819.800 789 2817.500 786.500Z" fill="#444"/><path d="M2803.600 817.200H2812.800L2811.700 822.300A1.900 1.900 0 0 1 2809.800 823.800H2806.600A1.900 1.900 0 0 1 2804.700 822.300Z" fill="#444"/><g stroke="#444" stroke-width="3.2"><rect x="2789.700" y="881.700" width="36.700" height="36.700" rx="1.500"/><path d="M2798.800 900.800V909.300M2805 890.600V909.300M2811 896.800V909.300M2817 902.500V909.300"/></g><rect x="2782" y="948" width="52" height="2" fill="#dedede"/><rect x="2792.2" y="982" width="13.800" height="13.800" fill="#989898"/><rect x="2810.2" y="982" width="13.800" height="13.800" fill="#989898"/><rect x="2792.2" y="1000" width="13.800" height="13.800" fill="#989898"/><rect x="2810.2" y="1000" width="13.800" height="13.800" fill="#989898"/><path d="M2808 1074L2828 1094L2808 1114L2788 1094ZM2808 1087.500L2801.500 1094L2808 1100.500L2814.500 1094Z" fill="#989898" fill-rule="evenodd"/><g fill="#989898"><circle cx="2797.900" cy="1184.600" r="6.800"/><circle cx="2809.700" cy="1185.200" r="6.400"/><circle cx="2819.500" cy="1189.600" r="8.400"/><circle cx="2794" cy="1193.800" r="6.100"/><circle cx="2802.800" cy="1197.800" r="6.400"/><circle cx="2812.300" cy="1194.900" r="5.900"/><circle cx="2805.400" cy="1190.900" r="7"/></g></svg>
</div></body></html>
